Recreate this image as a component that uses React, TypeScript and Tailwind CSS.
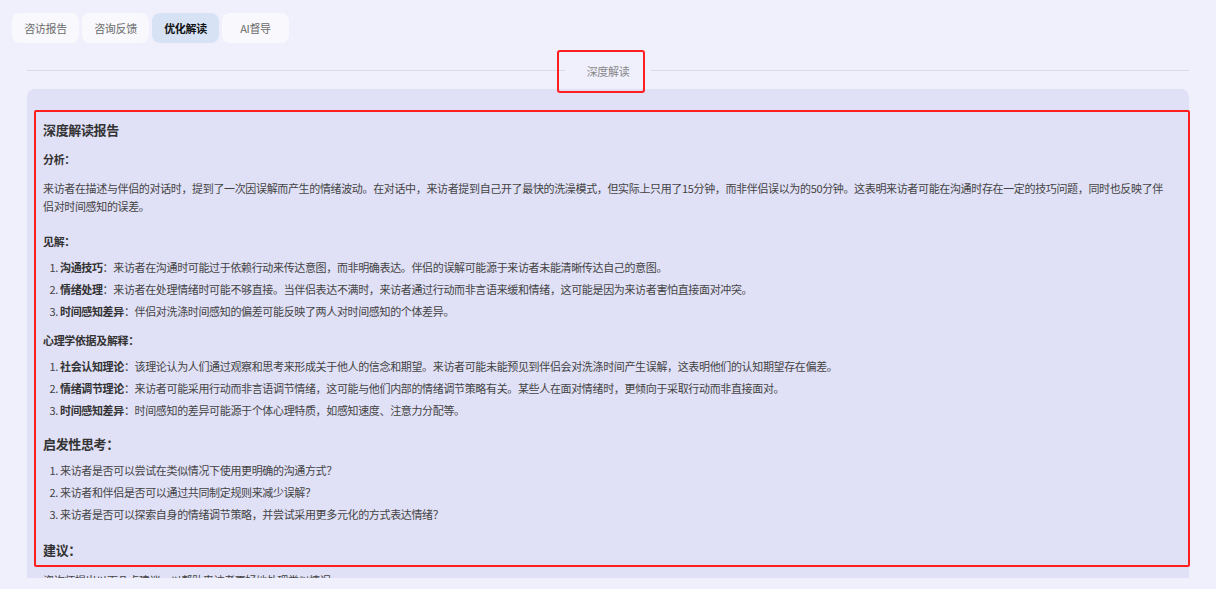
import React from 'react';

type Point = {
  title: string;
  text: string;
};

const tabs = ['咨访报告', '咨询反馈', '优化解读', 'AI督导'];

const insights: Point[] = [
  { title: '沟通技巧', text: '来访者在沟通时可能过于依赖行动来传达意图，而非明确表达。伴侣的误解可能源于来访者未能清晰传达自己的意图。' },
  { title: '情绪处理', text: '来访者在处理情绪时可能不够直接。当伴侣表达不满时，来访者通过行动而非言语来缓和情绪，这可能是因为来访者害怕直接面对冲突。' },
  { title: '时间感知差异', text: '伴侣对洗涤时间感知的偏差可能反映了两人对时间感知的个体差异。' },
];

const theories: Point[] = [
  { title: '社会认知理论', text: '该理论认为人们通过观察和思考来形成关于他人的信念和期望。来访者可能未能预见到伴侣会对洗涤时间产生误解，这表明他们的认知期望存在偏差。' },
  { title: '情绪调节理论', text: '来访者可能采用行动而非言语调节情绪，这可能与他们内部的情绪调节策略有关。某些人在面对情绪时，更倾向于采取行动而非直接面对。' },
  { title: '时间感知差异', text: '时间感知的差异可能源于个体心理特质，如感知速度、注意力分配等。' },
];

const questions = [
  '来访者是否可以尝试在类似情况下使用更明确的沟通方式？',
  '来访者和伴侣是否可以通过共同制定规则来减少误解？',
  '来访者是否可以探索自身的情绪调节策略，并尝试采用更多元化的方式表达情绪？',
];

const PointList: React.FC<{ items: Point[]; className: string }> = ({ items, className }) => (
  <ol className={`list-decimal pl-[17px] ${className}`}>
    {items.map((item) => (
      <li key={item.title + item.text.length} className="leading-[22px]">
        <span className="font-bold text-[#333]">{item.title}</span>：{item.text}
      </li>
    ))}
  </ol>
);

const App: React.FC = () => {
  return (
    <div className="relative h-[589px] overflow-hidden bg-[#f0effc] font-['Noto_Sans_CJK_SC','Noto_Sans',sans-serif] text-[11px] tracking-[-0.35px] text-[#444]">
      <div className="flex gap-[3px] pl-3 pt-[13px]">
        {tabs.map((tab, i) => (
          <div
            key={tab}
            className={
              i === 2
                ? 'flex h-[30px] w-[67px] items-center justify-center rounded-lg bg-[#d7e3f5] font-bold text-[#111]'
                : 'flex h-[30px] w-[67px] items-center justify-center rounded-lg bg-[#f9f9fd] text-[#6b6b6b]'
            }
          >
            {tab}
          </div>
        ))}
      </div>

      <div className="mx-[27px] mt-[17px] flex h-5 items-center">
        <div className="h-px flex-1 bg-[#dcdce8]" />
        <span className="px-[22px] pt-[3px] text-[#888]">深度解读</span>
        <div className="h-px flex-1 bg-[#dcdce8]" />
      </div>

      <div className="mx-[27px] mt-[9px] h-[489px] overflow-hidden rounded-t-lg bg-[#e0e0f6] pl-4 pr-4 pt-[31px]">
        <h3 className="text-[13px] font-semibold leading-5 text-[#333]">深度解读报告</h3>
        <p className="mt-[10px] font-bold leading-[18px] text-[#333]">分析：</p>
        <p className="mt-[11px] leading-[18px]">
          来访者在描述与伴侣的对话时，提到了一次因误解而产生的情绪波动。在对话中，来访者提到自己开了最快的洗澡模式，但实际上只用了15分钟，而非伴侣误以为的50分钟。这表明来访者可能在沟通时存在一定的技巧问题，同时也反映了伴侣对时间感知的误差。
        </p>

        <p className="mt-[17px] font-bold leading-[18px] text-[#333]">见解：</p>
        <PointList items={insights} className="mt-[6px]" />

        <p className="mt-[9px] font-bold leading-[18px] text-[#333]">心理学依据及解释：</p>
        <PointList items={theories} className="mt-[6px]" />

        <h3 className="mt-[13px] text-[13px] font-bold leading-5 text-[#333]">启发性思考：</h3>
        <ol className="mt-[5px] list-decimal pl-[17px]">
          {questions.map((q) => (
            <li key={q} className="leading-[22px]">
              {q}
            </li>
          ))}
        </ol>

        <h3 className="mt-[15px] text-[13px] font-bold leading-5 text-[#333]">建议：</h3>
        <p className="mt-[11px] leading-[18px]">咨询师提出以下几点建议，以帮助来访者更好地处理类似情况。</p>
      </div>

      {/* annotation boxes */}
      <div className="absolute left-[557px] top-[50px] h-[43px] w-[88px] rounded-[3px] border-2 border-[#ff1f1f]" />
      <div className="absolute left-[34px] top-[110px] h-[457px] w-[1156px] rounded-[2px] border-2 border-[#ff1f1f]" />
    </div>
  );
};

export default App;
